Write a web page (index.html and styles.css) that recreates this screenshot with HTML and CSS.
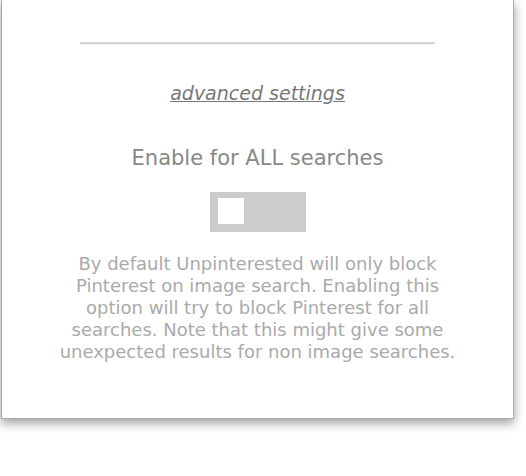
FILE: index.html
```html
<!DOCTYPE html>
<html lang="en">
<head>
    <meta charset="UTF-8">
    <title>Unpinterested options</title>
    <link rel="stylesheet" href="styles.css">
</head>
<body>
    <div class="panel">
        <hr class="divider">

        <a class="advanced" href="#">advanced settings</a>

        <div class="option">
            <h2>Enable for ALL searches</h2>
            <label class="switch">
                <input type="checkbox" id="allSearches">
                <span class="knob"></span>
            </label>
            <p class="hint">By default Unpinterested will only block Pinterest on image search. Enabling this option will try to block Pinterest for all searches. Note that this might give some unexpected results for non image searches.</p>
        </div>
    </div>
</body>
</html>
```

FILE: styles.css
```css
html {
    background: #fff;
}

body {
    font-family: 'DejaVu Sans', sans-serif;
    margin: 0;
    padding: 0 12px 40px 1px;
    min-height: 476px;
    box-sizing: border-box;
}

.panel {
    background: #fff;
    border: 1px solid #aaa;
    border-top: none;
    box-shadow: 0 4px 10px rgba(0, 0, 0, 0.4);
    padding: 42px 0 55px;
    display: flex;
    flex-direction: column;
    align-items: center;
}

.divider {
    width: 355px;
    margin: 0;
    border: none;
    border-top: 2px solid #d6d6d6;
    border-bottom: 1px solid #f2f2f2;
}

.advanced {
    margin-top: 37px;
    font-size: 19px;
    font-style: italic;
    color: #777;
    text-decoration: underline;
}

.option {
    display: flex;
    flex-direction: column;
    align-items: center;
}

.option h2 {
    margin: 42px 0 0;
    font-size: 21px;
    font-weight: normal;
    color: #888;
}

.switch {
    display: block;
    position: relative;
    width: 96px;
    height: 40px;
    margin-top: 22px;
    background: #ccc;
    cursor: pointer;
}

.switch input {
    display: none;
}

.knob {
    position: absolute;
    left: 8px;
    top: 6px;
    width: 26px;
    height: 26px;
    background: #fff;
}

.switch input:checked + .knob {
    left: 62px;
}

.hint {
    width: 400px;
    margin: 21px 0 0;
    font-size: 18px;
    line-height: 22px;
    text-align: center;
    color: #aaa;
}
```
